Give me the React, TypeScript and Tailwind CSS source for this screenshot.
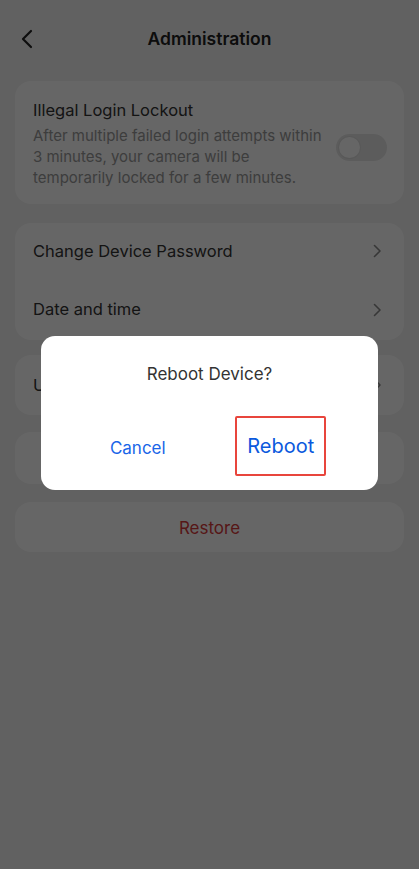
import React from "react";

function Chevron() {
  return (
    <svg width="10" height="16" viewBox="0 0 10 16" fill="none" stroke="#8a8a8a" strokeWidth="1.6" strokeLinecap="round" strokeLinejoin="round">
      <path d="M2.5 2.5 L8 8 L2.5 13.5" />
    </svg>
  );
}

function Row({ label, h }: { label: string; h: string }) {
  return (
    <div className={`flex ${h} items-center justify-between pl-[18px] pr-[22px]`}>
      <span className="text-[16.5px] text-[#333]">{label}</span>
      <Chevron />
    </div>
  );
}

export default function App() {
  return (
    <div
      className="relative h-[869px] w-[419px] overflow-hidden bg-[#f3f3f3]"
      style={{ fontFamily: "Inter, 'Noto Sans', sans-serif" }}
    >
      <div className="flex h-[78px] items-center px-[20px]">
        <div className="flex w-[30px] items-center">
          <svg width="14" height="22" viewBox="0 0 14 22" fill="none" stroke="#222" strokeWidth="2.2" strokeLinecap="round" strokeLinejoin="round">
            <path d="M11 3 L3 11 L11 19" />
          </svg>
        </div>
        <div className="flex-1 pr-[30px] text-center text-[17.5px] font-semibold text-[#222]">Administration</div>
      </div>

      <div className="flex flex-col px-[15px] pt-[3px]">
        <div className="h-[123px] rounded-[16px] bg-white pl-[18px] pr-[17px] pt-[18px]">
          <div className="text-[16.5px] leading-[22px] text-[#333]">Illegal Login Lockout</div>
          <div className="mt-[4px] flex items-center justify-between">
            <div className="w-[292px] text-[15px] leading-[21px] text-[#999]">
              After multiple failed login attempts within 3 minutes, your camera will be temporarily locked for a few minutes.
            </div>
            <div className="mb-[18px] flex h-[27px] w-[51px] items-center rounded-full bg-[#e6e6e6] p-[3px]">
              <div className="h-[21px] w-[21px] rounded-full bg-white shadow-[0_0_0_1px_#ddd]" />
            </div>
          </div>
        </div>

        <div className="mt-[19px] h-[117px] rounded-[16px] bg-white">
          <Row label="Change Device Password" h="h-[56px]" />
          <Row label="Date and time" h="h-[61px]" />
        </div>

        <div className="mt-[15px] h-[60px] rounded-[16px] bg-white">
          <Row label="Upgrade Firmware" h="h-[60px]" />
        </div>

        <div className="mt-[17px] flex h-[52px] items-center justify-center rounded-[16px] bg-white text-[17px] text-[#333]">
          Reboot Device
        </div>

        <div className="mt-[18px] flex h-[50px] items-center justify-center rounded-[16px] bg-white pt-[3px] text-[17px] text-[#d83a3a]">
          Restore
        </div>
      </div>

      <div className="absolute inset-0 bg-black/60" />

      <div className="absolute left-[41px] top-[336px] flex h-[154px] w-[337px] flex-col rounded-[14px] bg-white">
        <div className="pt-[26px] text-center text-[17px] leading-[24px] text-[#333]">Reboot Device?</div>
        <div className="mt-[30px] flex flex-1 items-start">
          <div className="flex w-1/2 justify-center pt-[20px] text-[17px] text-[#1a66e8]">
            <span className="ml-[25px]">Cancel</span>
          </div>
          <div className="flex w-1/2 justify-center">
            <div className="mr-[26px] flex h-[60px] w-[91px] items-center justify-center rounded-[2px] border-2 border-[#e8453c] text-[20px] text-[#0b59dd]">
              Reboot
            </div>
          </div>
        </div>
      </div>
    </div>
  );
}
